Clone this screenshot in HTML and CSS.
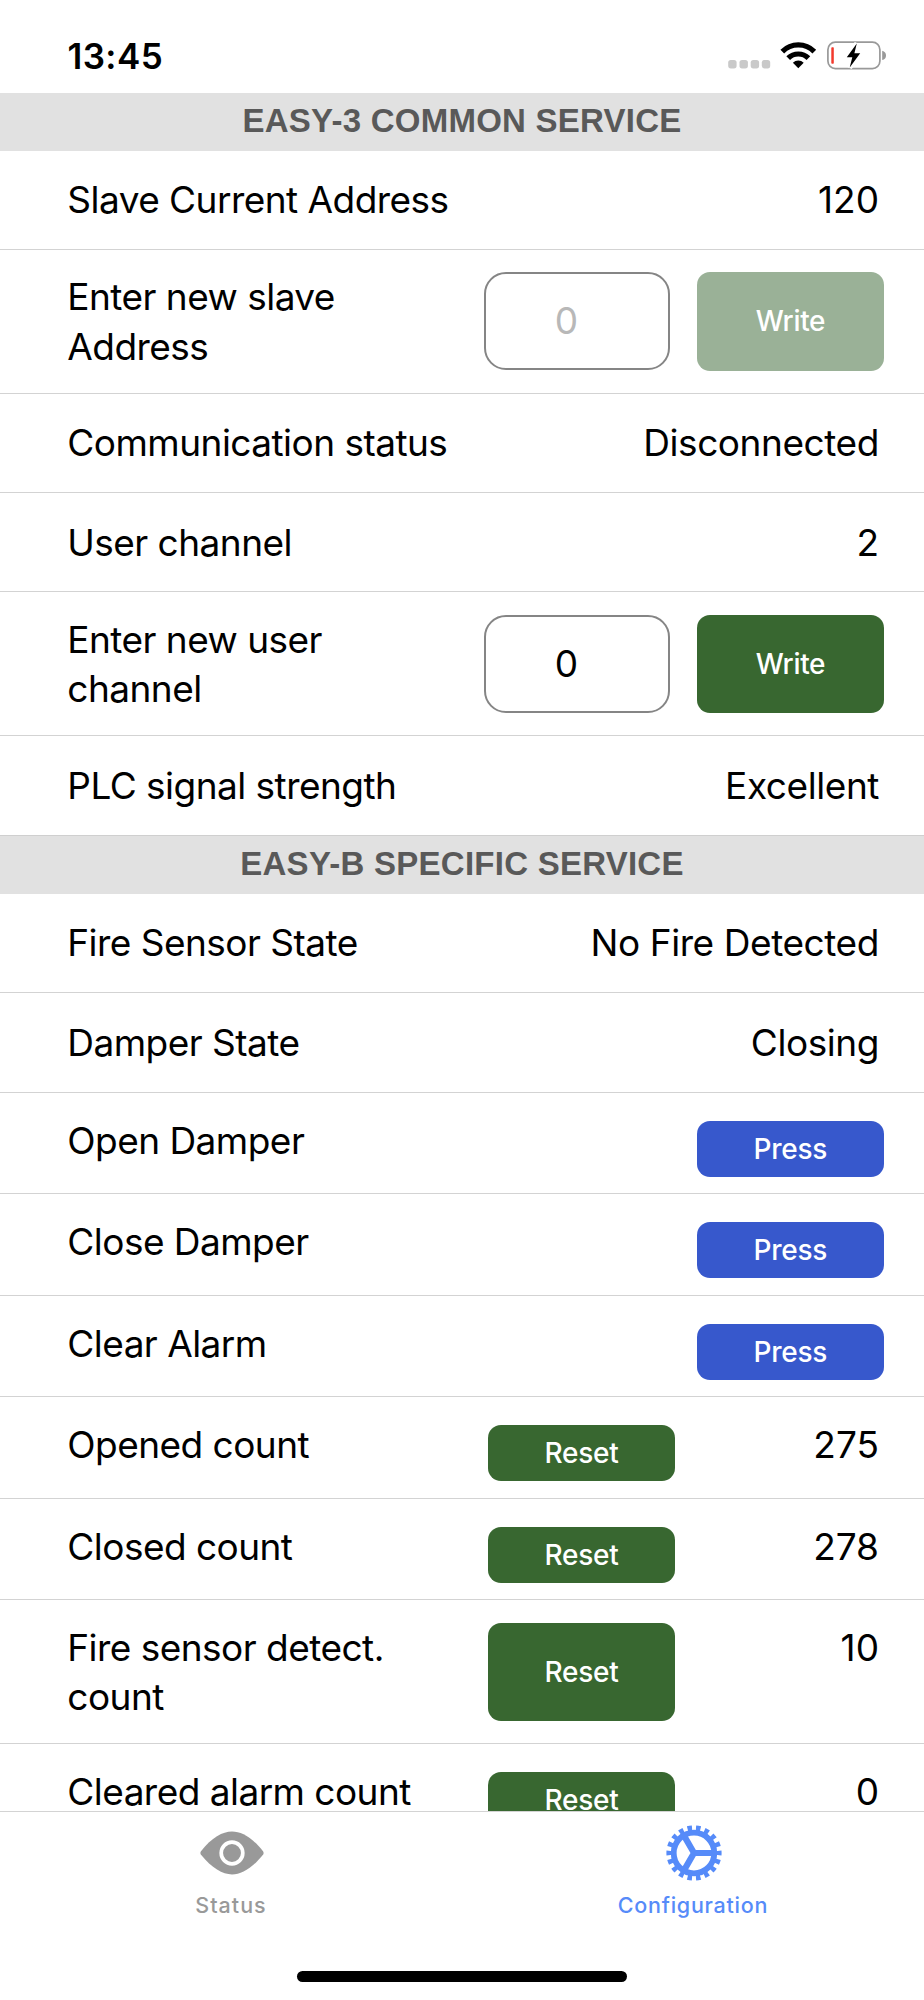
FILE: index.html
```html
<!DOCTYPE html>
<html lang="en">
<head>
<meta charset="utf-8">
<title>Configuration</title>
<link rel="stylesheet" href="styles.css">
</head>
<body>
<div class="screen">
  <header class="statusbar">
    <span class="time">13:45</span>
    <svg class="indicators" width="160" height="32" viewBox="727 40 160 32">
      <g fill="#c9c9c9">
        <rect x="728.2" y="60" width="8.4" height="8.4" rx="2.6"/>
        <rect x="739.5" y="60" width="8.4" height="8.4" rx="2.6"/>
        <rect x="750.7" y="60" width="8.4" height="8.4" rx="2.6"/>
        <rect x="761.8" y="60" width="8.4" height="8.4" rx="2.6"/>
      </g>
      <g fill="none" stroke="#000" stroke-width="5.2">
        <path d="M782.3 51.6A22.4 22.4 0 0 1 814.3 51.6"/>
        <path d="M788.2 58.2A14.2 14.2 0 0 1 808.4 58.2"/>
      </g>
      <path d="M798.3 68.3L792.9 62.7A8 8 0 0 1 803.7 62.7Z"/>
      <rect x="827.9" y="42.2" width="52" height="26.4" rx="7.5" fill="none" stroke="#999" stroke-width="1.7"/>
      <path d="M882.2 50.7Q886 51.8 886 55.4Q886 59 882.2 60.1Z" fill="#999"/>
      <rect x="831.3" y="47.2" width="2.5" height="16.6" rx=".8" fill="#f2392c"/>
      <path d="M856.8 43.5L846.8 57.3H852.3L849.7 67.5L860.2 53.3H854.4Z" fill="#000" stroke="#fff" stroke-width="5" paint-order="stroke"/>
    </svg>
  </header>
  <main class="list">
    <h2 class="section section-a">EASY-3 COMMON SERVICE</h2>
    <div class="row"><span class="label">Slave Current Address</span><span class="value">120</span></div>
    <div class="row tall">
      <span class="label">Enter new slave Address</span>
      <div class="field muted">0</div><button class="btn green faded">Write</button>
    </div>
    <div class="row"><span class="label">Communication status</span><span class="value word">Disconnected</span></div>
    <div class="row"><span class="label">User channel</span><span class="value">2</span></div>
    <div class="row tall">
      <span class="label">Enter new user channel</span>
      <div class="field">0</div><button class="btn green">Write</button>
    </div>
    <div class="row last"><span class="label">PLC signal strength</span><span class="value word">Excellent</span></div>
    <h2 class="section section-b">EASY-B SPECIFIC SERVICE</h2>
    <div class="row"><span class="label">Fire Sensor State</span><span class="value word">No Fire Detected</span></div>
    <div class="row"><span class="label">Damper State</span><span class="value word">Closing</span></div>
    <div class="row action"><span class="label">Open Damper</span><button class="btn blue">Press</button></div>
    <div class="row action"><span class="label">Close Damper</span><button class="btn blue">Press</button></div>
    <div class="row action"><span class="label">Clear Alarm</span><button class="btn blue">Press</button></div>
    <div class="row action"><span class="label">Opened count</span><button class="btn green">Reset</button><span class="value">275</span></div>
    <div class="row action"><span class="label">Closed count</span><button class="btn green">Reset</button><span class="value">278</span></div>
    <div class="row action double"><span class="label">Fire sensor detect. count</span><button class="btn green">Reset</button><span class="value">10</span></div>
    <div class="row action"><span class="label">Cleared alarm count</span><button class="btn green">Reset</button><span class="value">0</span></div>
  </main>
  <nav class="tabs">
    <a class="tab">
      <svg width="64" height="56" viewBox="-32 -28 64 56">
        <path d="M-31.2 -1.6C-20 -15.5 -9.5 -21.4 0 -21.4S20 -15.5 31.2 -1.6Q32 0 31.2 1.6C20 15.5 9.5 21.4 0 21.4S-20 15.5 -31.2 1.6Q-32 0 -31.2 -1.6Z" fill="#999"/>
        <circle r="10.8" fill="none" stroke="#fff" stroke-width="3.7"/>
      </svg>
      <span>Status</span>
    </a>
    <a class="tab active">
      <svg width="64" height="56" viewBox="-32 -28 64 56" fill="none" stroke="#568bf9">
        <circle r="24.4" stroke-width="6.4" pathLength="36" stroke-dasharray="1.05 .95" stroke-dashoffset=".525"/>
        <circle r="20.3" stroke-width="5.8"/>
        <path d="M0 0H19M0 0L-9.6 -16.6M0 0L-9.6 16.6" stroke-width="6.2"/>
      </svg>
      <span>Configuration</span>
    </a>
  </nav>
  <div class="home"></div>
</div>
</body>
</html>
```
FILE: styles.css
```css
* { box-sizing: border-box; }
body { margin: 0; background: #fff; font-family: Inter, "Liberation Sans", sans-serif; color: #000; }
.screen { width: 924px; height: 2000px; display: flex; flex-direction: column; overflow: hidden; }
.statusbar { height: 92.8px; flex: none; display: flex; justify-content: space-between; align-items: flex-start; padding: 40px 37px 0 67.5px; }
.time { font-size: 35px; font-weight: 600; line-height: 32px; letter-spacing: .4px; }
.indicators { display: block; }
.list { height: 1718.7px; flex: none; overflow: hidden; }
.section { margin: 0; height: 57.8px; background: #e1e1e1; color: #595959; font: bold 33px/56px "Liberation Sans", Arial, sans-serif; letter-spacing: .25px; text-align: center; white-space: nowrap; }
.section-b { height: 58.2px; }
.row { height: 99.3px; display: flex; align-items: flex-start; padding: 24.5px 40.5px 0 67.3px; border-bottom: 1px solid #d3d3d3; font-size: 37px; line-height: 49.3px; }
.row.last { border-bottom-color: #cfcfcf; }
.label { width: 421px; flex: none; letter-spacing: -.53px; }
.value { flex: 1; padding-right: 4.5px; text-align: right; white-space: nowrap; }
.word { letter-spacing: -.43px; }
.tall { height: 144px; padding-top: 22.5px; }
.tall .label { width: 300px; margin-right: 117px; }
.field { width: 186px; height: 98px; flex: none; margin-right: 27px; padding-right: 22px; border: 2px solid #858585; border-radius: 22px; text-align: center; line-height: 94px; }
.muted { color: #b8b8b8; }
.btn { width: 186.4px; height: 98.2px; flex: none; padding: 0; border: 0; border-radius: 13px; color: #fff; font: 500 28px/1 Inter, sans-serif; letter-spacing: -.3px; text-align: center; }
.green { background: #386730; }
.faded { background: #9ab197; }
.blue { background: #3758cc; }
.action { height: 101.5px; padding-top: 23px; }
.action .btn { height: 56px; margin-top: 5px; }
.action .blue { margin-left: auto; }
.double { height: 144px; }
.double .label { width: 340px; margin-right: 81px; }
.double .btn { height: 98.2px; margin-top: -.5px; }
.tabs { height: 128px; flex: none; display: grid; grid-template-columns: 1fr 1fr; border-top: 1px solid #d3d3d3; }
.tab { display: flex; flex-direction: column; align-items: center; padding-top: 12.5px; color: #999; font-size: 21.5px; font-weight: 500; line-height: 30px; letter-spacing: 1px; }
.tab svg { margin-left: 1px; margin-bottom: 9.5px; }
.active { color: #568bf9; letter-spacing: .75px; }
.home { width: 330px; height: 11px; flex: none; margin: 31.5px 0 0 297px; border-radius: 6px; background: #000; }
```
